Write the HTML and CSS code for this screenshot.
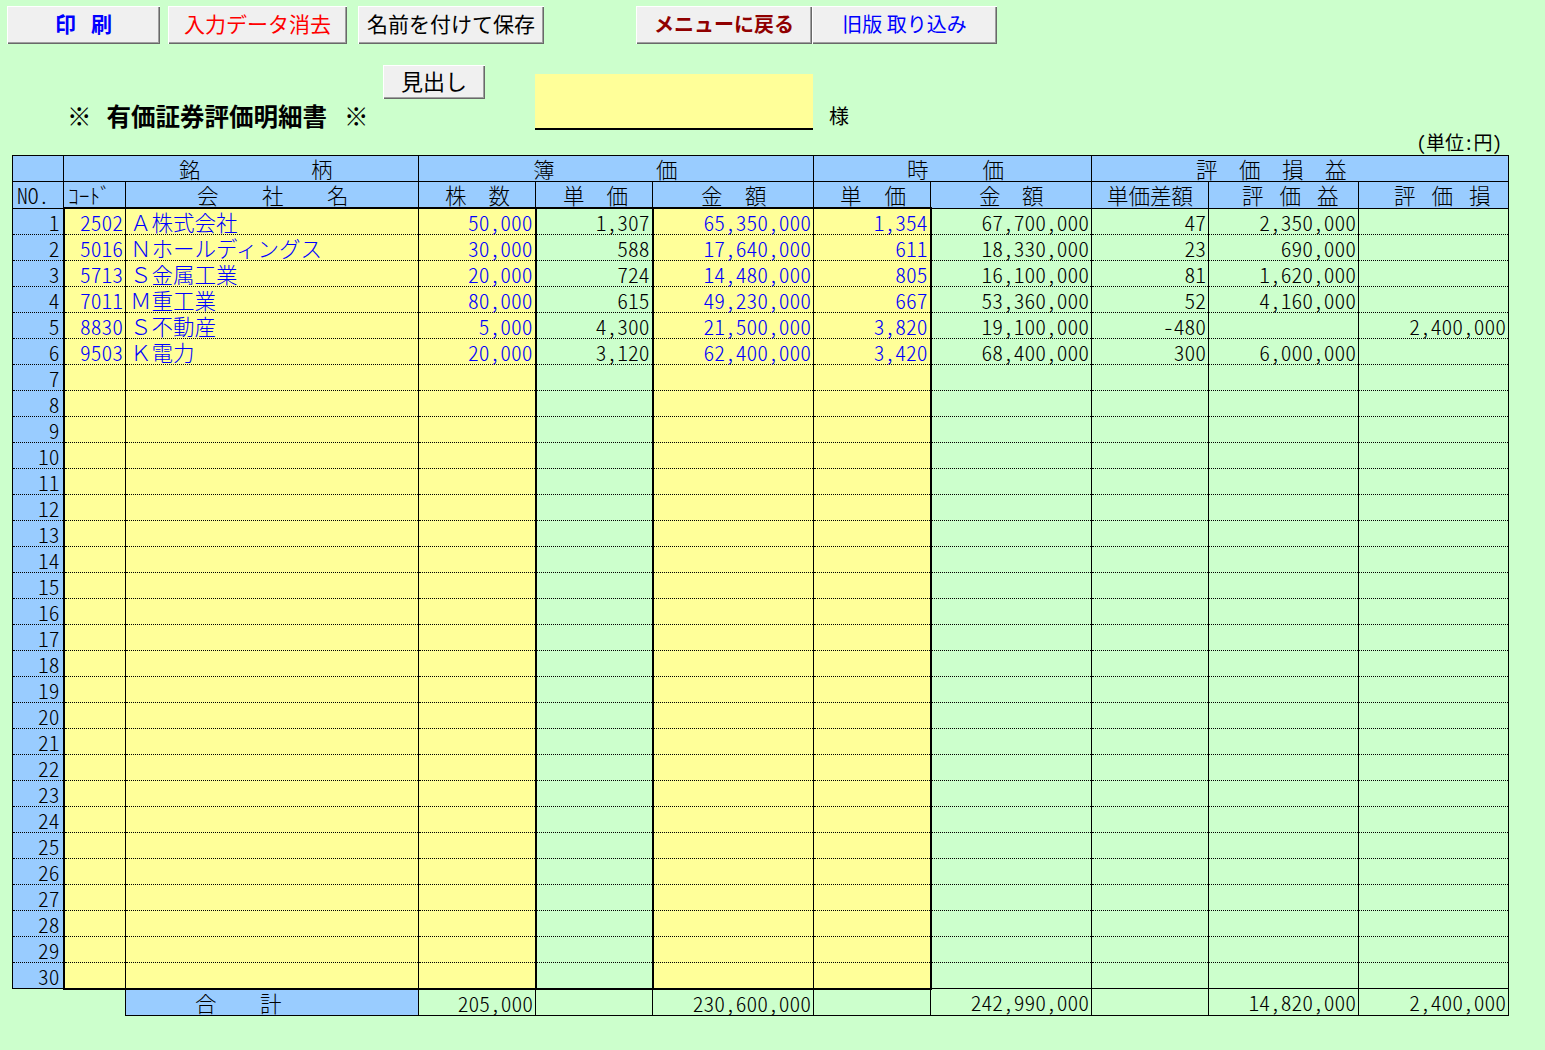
FILE: index.html
```html
<!DOCTYPE html>
<html lang="ja">
<head>
<meta charset="utf-8">
<title>有価証券評価明細書</title>
<link rel="stylesheet" href="styles.css">
</head>
<body>
<div class="toolbar">
  <button class="btn b-print"><span class="sp">印</span>刷</button>
  <button class="btn b-clear">入力データ消去</button>
  <button class="btn b-save">名前を付けて保存</button>
  <button class="btn b-menu">メニューに戻る</button>
  <button class="btn b-old">旧版 取り込み</button>
</div>
<div class="head">
  <div class="head-left">
    <button class="btn b-midashi">見出し</button>
    <div class="title"><span class="kome-l">※</span>有価証券評価明細書<span class="kome-r">※</span></div>
  </div>
  <div class="name-box"></div>
  <span class="sama">様</span>
</div>
<div class="unit">(単位:円)</div>
<table class="grid">
  <colgroup>
    <col class="w-no"><col class="w-code"><col class="w-name"><col class="w-qty"><col class="w-bp"><col class="w-ba"><col class="w-mp"><col class="w-ma"><col class="w-df"><col class="w-gn"><col class="w-lo">
  </colgroup>
  <thead>
    <tr>
      <th></th>
      <th colspan="2" class="h-meigara"><span class="sp">銘</span>柄</th>
      <th colspan="3" class="h-boka"><span class="sp">簿</span>価</th>
      <th colspan="2" class="h-jika"><span class="sp">時</span>価</th>
      <th colspan="3" class="h-hyoka"><span class="sp">評価損</span>益</th>
    </tr>
    <tr class="hrow2">
      <th class="h-no">NO.</th>
      <th class="h-code tb">ｺｰﾄﾞ</th>
      <th class="h-name tb"><span class="sp">会社</span>名</th>
      <th class="h-qty tb"><span class="sp">株</span>数</th>
      <th class="h-bp tb"><span class="sp">単</span>価</th>
      <th class="h-ba tb"><span class="sp">金</span>額</th>
      <th class="h-mp tb"><span class="sp">単</span>価</th>
      <th class="h-ma"><span class="sp">金</span>額</th>
      <th class="h-df">単価差額</th>
      <th class="h-gn"><span class="sp">評価</span>益</th>
      <th class="h-lo"><span class="sp">評価</span>損</th>
    </tr>
  </thead>
  <tbody>
    <tr><td class="no">1</td><td class="code">2502</td><td class="name">Ａ株式会社</td><td class="qty">50,000</td><td class="bp">1,307</td><td class="ba">65,350,000</td><td class="mp">1,354</td><td class="ma">67,700,000</td><td class="df">47</td><td class="gn">2,350,000</td><td class="lo"></td></tr>
    <tr><td class="no">2</td><td class="code">5016</td><td class="name">Ｎホールディングス</td><td class="qty">30,000</td><td class="bp">588</td><td class="ba">17,640,000</td><td class="mp">611</td><td class="ma">18,330,000</td><td class="df">23</td><td class="gn">690,000</td><td class="lo"></td></tr>
    <tr><td class="no">3</td><td class="code">5713</td><td class="name">Ｓ金属工業</td><td class="qty">20,000</td><td class="bp">724</td><td class="ba">14,480,000</td><td class="mp">805</td><td class="ma">16,100,000</td><td class="df">81</td><td class="gn">1,620,000</td><td class="lo"></td></tr>
    <tr><td class="no">4</td><td class="code">7011</td><td class="name">Ｍ重工業</td><td class="qty">80,000</td><td class="bp">615</td><td class="ba">49,230,000</td><td class="mp">667</td><td class="ma">53,360,000</td><td class="df">52</td><td class="gn">4,160,000</td><td class="lo"></td></tr>
    <tr><td class="no">5</td><td class="code">8830</td><td class="name">Ｓ不動産</td><td class="qty">5,000</td><td class="bp">4,300</td><td class="ba">21,500,000</td><td class="mp">3,820</td><td class="ma">19,100,000</td><td class="df">-480</td><td class="gn"></td><td class="lo">2,400,000</td></tr>
    <tr><td class="no">6</td><td class="code">9503</td><td class="name">Ｋ電力</td><td class="qty">20,000</td><td class="bp">3,120</td><td class="ba">62,400,000</td><td class="mp">3,420</td><td class="ma">68,400,000</td><td class="df">300</td><td class="gn">6,000,000</td><td class="lo"></td></tr>
    <tr><td class="no">7</td><td class="code"></td><td class="name"></td><td class="qty"></td><td class="bp"></td><td class="ba"></td><td class="mp"></td><td class="ma"></td><td class="df"></td><td class="gn"></td><td class="lo"></td></tr>
    <tr><td class="no">8</td><td class="code"></td><td class="name"></td><td class="qty"></td><td class="bp"></td><td class="ba"></td><td class="mp"></td><td class="ma"></td><td class="df"></td><td class="gn"></td><td class="lo"></td></tr>
    <tr><td class="no">9</td><td class="code"></td><td class="name"></td><td class="qty"></td><td class="bp"></td><td class="ba"></td><td class="mp"></td><td class="ma"></td><td class="df"></td><td class="gn"></td><td class="lo"></td></tr>
    <tr><td class="no">10</td><td class="code"></td><td class="name"></td><td class="qty"></td><td class="bp"></td><td class="ba"></td><td class="mp"></td><td class="ma"></td><td class="df"></td><td class="gn"></td><td class="lo"></td></tr>
    <tr><td class="no">11</td><td class="code"></td><td class="name"></td><td class="qty"></td><td class="bp"></td><td class="ba"></td><td class="mp"></td><td class="ma"></td><td class="df"></td><td class="gn"></td><td class="lo"></td></tr>
    <tr><td class="no">12</td><td class="code"></td><td class="name"></td><td class="qty"></td><td class="bp"></td><td class="ba"></td><td class="mp"></td><td class="ma"></td><td class="df"></td><td class="gn"></td><td class="lo"></td></tr>
    <tr><td class="no">13</td><td class="code"></td><td class="name"></td><td class="qty"></td><td class="bp"></td><td class="ba"></td><td class="mp"></td><td class="ma"></td><td class="df"></td><td class="gn"></td><td class="lo"></td></tr>
    <tr><td class="no">14</td><td class="code"></td><td class="name"></td><td class="qty"></td><td class="bp"></td><td class="ba"></td><td class="mp"></td><td class="ma"></td><td class="df"></td><td class="gn"></td><td class="lo"></td></tr>
    <tr><td class="no">15</td><td class="code"></td><td class="name"></td><td class="qty"></td><td class="bp"></td><td class="ba"></td><td class="mp"></td><td class="ma"></td><td class="df"></td><td class="gn"></td><td class="lo"></td></tr>
    <tr><td class="no">16</td><td class="code"></td><td class="name"></td><td class="qty"></td><td class="bp"></td><td class="ba"></td><td class="mp"></td><td class="ma"></td><td class="df"></td><td class="gn"></td><td class="lo"></td></tr>
    <tr><td class="no">17</td><td class="code"></td><td class="name"></td><td class="qty"></td><td class="bp"></td><td class="ba"></td><td class="mp"></td><td class="ma"></td><td class="df"></td><td class="gn"></td><td class="lo"></td></tr>
    <tr><td class="no">18</td><td class="code"></td><td class="name"></td><td class="qty"></td><td class="bp"></td><td class="ba"></td><td class="mp"></td><td class="ma"></td><td class="df"></td><td class="gn"></td><td class="lo"></td></tr>
    <tr><td class="no">19</td><td class="code"></td><td class="name"></td><td class="qty"></td><td class="bp"></td><td class="ba"></td><td class="mp"></td><td class="ma"></td><td class="df"></td><td class="gn"></td><td class="lo"></td></tr>
    <tr><td class="no">20</td><td class="code"></td><td class="name"></td><td class="qty"></td><td class="bp"></td><td class="ba"></td><td class="mp"></td><td class="ma"></td><td class="df"></td><td class="gn"></td><td class="lo"></td></tr>
    <tr><td class="no">21</td><td class="code"></td><td class="name"></td><td class="qty"></td><td class="bp"></td><td class="ba"></td><td class="mp"></td><td class="ma"></td><td class="df"></td><td class="gn"></td><td class="lo"></td></tr>
    <tr><td class="no">22</td><td class="code"></td><td class="name"></td><td class="qty"></td><td class="bp"></td><td class="ba"></td><td class="mp"></td><td class="ma"></td><td class="df"></td><td class="gn"></td><td class="lo"></td></tr>
    <tr><td class="no">23</td><td class="code"></td><td class="name"></td><td class="qty"></td><td class="bp"></td><td class="ba"></td><td class="mp"></td><td class="ma"></td><td class="df"></td><td class="gn"></td><td class="lo"></td></tr>
    <tr><td class="no">24</td><td class="code"></td><td class="name"></td><td class="qty"></td><td class="bp"></td><td class="ba"></td><td class="mp"></td><td class="ma"></td><td class="df"></td><td class="gn"></td><td class="lo"></td></tr>
    <tr><td class="no">25</td><td class="code"></td><td class="name"></td><td class="qty"></td><td class="bp"></td><td class="ba"></td><td class="mp"></td><td class="ma"></td><td class="df"></td><td class="gn"></td><td class="lo"></td></tr>
    <tr><td class="no">26</td><td class="code"></td><td class="name"></td><td class="qty"></td><td class="bp"></td><td class="ba"></td><td class="mp"></td><td class="ma"></td><td class="df"></td><td class="gn"></td><td class="lo"></td></tr>
    <tr><td class="no">27</td><td class="code"></td><td class="name"></td><td class="qty"></td><td class="bp"></td><td class="ba"></td><td class="mp"></td><td class="ma"></td><td class="df"></td><td class="gn"></td><td class="lo"></td></tr>
    <tr><td class="no">28</td><td class="code"></td><td class="name"></td><td class="qty"></td><td class="bp"></td><td class="ba"></td><td class="mp"></td><td class="ma"></td><td class="df"></td><td class="gn"></td><td class="lo"></td></tr>
    <tr><td class="no">29</td><td class="code"></td><td class="name"></td><td class="qty"></td><td class="bp"></td><td class="ba"></td><td class="mp"></td><td class="ma"></td><td class="df"></td><td class="gn"></td><td class="lo"></td></tr>
    <tr class="last"><td class="no">30</td><td class="code"></td><td class="name"></td><td class="qty"></td><td class="bp"></td><td class="ba"></td><td class="mp"></td><td class="ma"></td><td class="df"></td><td class="gn"></td><td class="lo"></td></tr>
    <tr class="total"><td class="blank" colspan="2"></td><td class="t-label"><span class="sp">合</span>計</td><td class="t-num">205,000</td><td class="t-num"></td><td class="t-num">230,600,000</td><td class="t-num"></td><td class="t-num">242,990,000</td><td class="t-num"></td><td class="t-num">14,820,000</td><td class="t-num">2,400,000</td></tr>
  </tbody>
</table>
</body>
</html>
```

FILE: styles.css
```css
* { box-sizing: border-box; }
html, body { margin: 0; padding: 0; }
body {
  background: #CCFFCC;
  width: 1545px;
  height: 1050px;
  overflow: hidden;
  font-family: "Noto Sans CJK JP", sans-serif;
  color: #000;
}

/* buttons */
.toolbar {
  display: flex;
  height: 44px;
  padding: 6px 0 0 7px;
}
.btn {
  height: 38px;
  padding: 0 0 3px 0;
  margin: 0;
  background: #F0F0F0;
  border: none;
  box-shadow: inset 1px 1px 0 #FFFFFF, inset -1px -1px 0 #696969, inset -2px -2px 0 #A0A0A0;
  font-family: "Noto Sans CJK JP", sans-serif;
  font-size: 21px;
  line-height: 35px;
  color: #000;
  white-space: nowrap;
}
.b-print { width: 153px; color: #0000FF; font-weight: 700; }
.b-print .sp { margin-right: 15px; }
.b-clear { width: 179px; margin-left: 8px; color: #FF0000; }
.b-save { width: 186px; margin-left: 11px; }
.b-menu { width: 176px; margin-left: 92px; color: #900000; font-weight: 700; font-size: 20px; }
.b-old { width: 185px; color: #0000FF; font-size: 20px; }
.b-midashi {
  width: 102px;
  height: 34px;
  line-height: 30px;
  padding-bottom: 4px;
  font-size: 22px;
  margin-left: 383px;
}

/* heading */
.head {
  display: flex;
  align-items: flex-end;
  margin-top: 21px;
  height: 65px;
}
.head-left {
  width: 535px;
  display: flex;
  flex-direction: column;
  align-items: flex-start;
}
.title {
  margin: 3px 0 0 67px;
  height: 28px;
  font-size: 24.5px;
  line-height: 28px;
  font-weight: 700;
  white-space: nowrap;
}
.kome-l { margin-right: 15px; }
.kome-r { margin-left: 17px; }
.name-box {
  width: 278px;
  height: 56px;
  background: #FFFF99;
  border-bottom: 2px solid #000;
}
.sama {
  margin-left: 16px;
  margin-bottom: 2px;
  font-size: 20px;
  line-height: 24px;
}
.unit {
  height: 25px;
  font-size: 19px;
  line-height: 24px;
  text-align: right;
  padding-right: 43px;
  font-feature-settings: "hwid" 1;
}

/* table */
.grid {
  border-collapse: collapse;
  table-layout: fixed;
  width: 1496px;
  margin-left: 12px;
  font-size: 21.5px;
}
.w-no { width: 51px; }
.w-code { width: 62px; }
.w-name { width: 293px; }
.w-qty { width: 117px; }
.w-bp { width: 117px; }
.w-ba { width: 161px; }
.w-mp { width: 117px; }
.w-ma { width: 161px; }
.w-df { width: 117px; }
.w-gn { width: 150px; }
.w-lo { width: 150px; }

.grid th, .grid td {
  height: 26px;
  padding: 1px 2px 0 2px;
  line-height: 24px;
  vertical-align: top;
  white-space: nowrap;
  overflow: visible;
  font-weight: 300;
}
.grid th {
  background: #99CCFF;
  border: 1px solid #000;
  text-align: left;
}
.grid th.tb { border-bottom: 2px solid #000; }

.grid th.h-meigara { padding-left: 115px; }
.h-meigara .sp { letter-spacing: 110.5px; }
.grid th.h-boka { padding-left: 114px; }
.h-boka .sp { letter-spacing: 101.5px; }
.grid th.h-jika { padding-left: 93px; }
.h-jika .sp { letter-spacing: 54px; }
.grid th.h-hyoka { padding-left: 104px; }
.h-hyoka .sp { letter-spacing: 21.5px; }
.grid th.h-no { padding-left: 4px; font-feature-settings: "hwid" 1; }
.grid th.h-code { padding-left: 4px; }
.grid th.h-name { padding-left: 71px; }
.h-name .sp { letter-spacing: 43.5px; }
.grid th.h-qty { padding-left: 26px; }
.h-qty .sp { letter-spacing: 22px; }
.grid th.h-bp { padding-left: 27px; }
.h-bp .sp { letter-spacing: 22px; }
.grid th.h-ba { padding-left: 48px; }
.h-ba .sp { letter-spacing: 22.5px; }
.grid th.h-mp { padding-left: 26px; }
.h-mp .sp { letter-spacing: 23px; }
.grid th.h-ma { padding-left: 48px; }
.h-ma .sp { letter-spacing: 21.5px; }
.grid th.h-df { padding-left: 15px; }
.grid th.h-gn { padding-left: 33px; }
.h-gn .sp { letter-spacing: 16px; }
.grid th.h-lo { padding-left: 35px; }
.h-lo .sp { letter-spacing: 16px; }

.grid td {
  border-left: 1px solid #000;
  border-right: 1px solid #000;
  border-top: 1px dotted #000;
  border-bottom: 1px dotted #000;
  text-align: right;
  font-feature-settings: "hwid" 1;
  background: #CCFFCC;
}
.grid td.no { background: #99CCFF; padding-right: 3px; }
.grid td.code, .grid td.name, .grid td.qty, .grid td.ba, .grid td.mp {
  background: #FFFF99;
  color: #0000FF;
}
.grid td.name {
  text-align: left;
  padding-left: 4px;
  font-feature-settings: normal;
}
.grid td.code { border-left: 2px solid #000; }
.grid td.qty { border-right: 2px solid #000; }
.grid td.ba { border-left: 2px solid #000; }
.grid td.mp { border-right: 2px solid #000; }

.grid tr.last td { border-bottom: 1px solid #000; }
.grid tr.last td.code, .grid tr.last td.name, .grid tr.last td.qty,
.grid tr.last td.bp, .grid tr.last td.ba, .grid tr.last td.mp {
  border-bottom: 2px solid #000;
}

.grid tr.total td {
  border: 1px solid #000;
  background: #CCFFCC;
  color: #000;
}
.grid tr.total td.blank {
  border: none;
  background: transparent;
}
.grid tr.total td.t-label {
  background: #99CCFF;
  text-align: left;
  padding-left: 69px;
  font-feature-settings: normal;
}
.t-label .sp { letter-spacing: 43.5px; }
```
